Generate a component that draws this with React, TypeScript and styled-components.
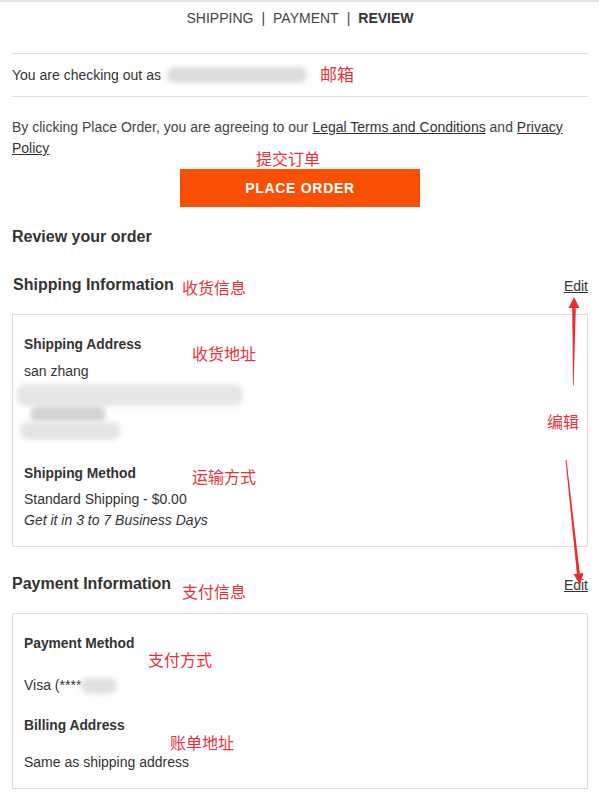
import styled, { createGlobalStyle } from "styled-components"

const GlobalStyle = createGlobalStyle`
  html, body {
    margin: 0;
    padding: 0;
    background: #fff;
  }
  body {
    font-family: "Liberation Sans", Arial, sans-serif;
    color: #333;
  }
`

const Page = styled.div`
  position: relative;
  width: 599px;
  min-height: 792px;
  box-sizing: border-box;
  padding: 0 11px 0 12px;
  border-top: 2px solid #e6e6e6;
  overflow: hidden;
`

const Steps = styled.nav`
  height: 51px;
  padding-top: 8px;
  box-sizing: border-box;
  text-align: center;
  font-size: 14px;
  line-height: 16px;
  color: #444;
`

const Step = styled.span<{ $active?: boolean }>`
  font-weight: ${({ $active }) => ($active ? 700 : 400)};
  color: ${({ $active }) => ($active ? "#333" : "#444")};
`

const Sep = styled.span`
  margin: 0 8px;
`

const Account = styled.div`
  display: flex;
  align-items: center;
  height: 42px;
  border-top: 1px solid #ddd;
  border-bottom: 1px solid #ddd;
  font-size: 14px;
`

const Smudge = styled.div<{ $w: number; $h: number; $x?: number; $tone?: string }>`
  width: ${({ $w }) => $w}px;
  height: ${({ $h }) => $h}px;
  margin-left: ${({ $x }) => $x ?? 0}px;
  background: ${({ $tone }) => $tone ?? "#e3e3e3"};
  border-radius: 8px;
  filter: blur(2.5px);
  flex-shrink: 0;
`

const Terms = styled.p`
  margin: 20px 0 0;
  font-size: 14px;
  line-height: 21px;
  color: #444;
`

const TermsLink = styled.a`
  color: #333;
  text-decoration: underline;
`

const PlaceOrder = styled.button`
  display: block;
  width: 240px;
  height: 38px;
  margin: 10px auto 0;
  border: none;
  background: #fa5005;
  color: #fff;
  font-family: "Liberation Sans", Arial, sans-serif;
  font-size: 14px;
  font-weight: 700;
  letter-spacing: 0.7px;
  cursor: pointer;
`

const ReviewTitle = styled.h2`
  margin: 20px 0 0;
  font-size: 16px;
  line-height: 20px;
  font-weight: 700;
  color: #333;
`

const SectionHead = styled.div<{ $top: number }>`
  display: flex;
  justify-content: space-between;
  align-items: center;
  margin-top: ${({ $top }) => $top}px;
  height: 20px;
`

const SectionTitle = styled.h3<{ $indent?: number }>`
  margin: 0 0 0 ${({ $indent }) => $indent ?? 0}px;
  font-size: 16px;
  line-height: 20px;
  font-weight: 700;
  color: #333;
`

const Edit = styled.a`
  font-size: 14px;
  line-height: 20px;
  color: #333;
  text-decoration: underline;
  margin-top: 2px;
`

const Card = styled.section`
  margin-top: 19px;
  border: 1px solid #ddd;
  padding: 21px 11px 15px;
`

const Label = styled.h4<{ $top?: number }>`
  margin: ${({ $top }) => $top ?? 0}px 0 0;
  font-size: 13.8px;
  line-height: 18px;
  font-weight: 700;
  color: #333;
`

const Value = styled.div<{ $top?: number; $italic?: boolean }>`
  display: flex;
  align-items: center;
  margin-top: ${({ $top }) => $top ?? 0}px;
  font-size: 14px;
  line-height: 21px;
  font-style: ${({ $italic }) => ($italic ? "italic" : "normal")};
  color: #333;
`

const Redacted = styled.div`
  display: flex;
  flex-direction: column;
  margin: 2px 0 0 -7px;
`

const Note = styled.span<{ $x: number; $y: number; $size?: number }>`
  position: absolute;
  left: ${({ $x }) => $x}px;
  top: ${({ $y }) => $y}px;
  font-family: "Noto Sans CJK SC", sans-serif;
  font-size: ${({ $size }) => $size ?? 16}px;
  line-height: 16px;
  color: #e8303a;
  white-space: nowrap;
`

const Arrows = styled.svg`
  position: absolute;
  left: 0;
  top: 0;
  pointer-events: none;
`

export default function App() {
  return (
    <>
      <GlobalStyle />
      <Page>
        <Steps>
          <Step>SHIPPING</Step>
          <Sep>|</Sep>
          <Step>PAYMENT</Step>
          <Sep>|</Sep>
          <Step $active>REVIEW</Step>
        </Steps>

        <Account>
          You are checking out as&nbsp;
          <Smudge $w={140} $h={16} $x={2} $tone="#dcdcdc" />
        </Account>

        <Terms>
          By clicking Place Order, you are agreeing to our <TermsLink>Legal Terms and Conditions</TermsLink> and{" "}
          <TermsLink>Privacy Policy</TermsLink>
        </Terms>

        <PlaceOrder>PLACE ORDER</PlaceOrder>

        <ReviewTitle>Review your order</ReviewTitle>

        <SectionHead $top={28}>
          <SectionTitle $indent={1}>Shipping Information</SectionTitle>
          <Edit>Edit</Edit>
        </SectionHead>
        <Card>
          <Label>Shipping Address</Label>
          <Value $top={7}>san zhang</Value>
          <Redacted>
            <Smudge $w={226} $h={22} $tone="#e6e6e6" />
            <Smudge $w={76} $h={16} $x={13} $tone="#d2d2d2" />
            <Smudge $w={100} $h={18} $x={3} $tone="#e4e4e4" />
          </Redacted>
          <Label $top={25}>Shipping Method</Label>
          <Value $top={6}>Standard Shipping - $0.00</Value>
          <Value $italic>Get it in 3 to 7 Business Days</Value>
        </Card>

        <SectionHead $top={27}>
          <SectionTitle>Payment Information</SectionTitle>
          <Edit>Edit</Edit>
        </SectionHead>
        <Card>
          <Label>Payment Method</Label>
          <Value $top={22}>
            Visa (****
            <Smudge $w={36} $h={16} $tone="#e0e0e0" />
          </Value>
          <Label $top={21}>Billing Address</Label>
          <Value $top={17}>Same as shipping address</Value>
        </Card>

        <Note $x={320} $y={64} $size={17}>邮箱</Note>
        <Note $x={256} $y={148}>提交订单</Note>
        <Note $x={182} $y={277}>收货信息</Note>
        <Note $x={192} $y={343}>收货地址</Note>
        <Note $x={547} $y={411}>编辑</Note>
        <Note $x={192} $y={466}>运输方式</Note>
        <Note $x={182} $y={581}>支付信息</Note>
        <Note $x={148} $y={649}>支付方式</Note>
        <Note $x={170} $y={732}>账单地址</Note>

        <Arrows width="599" height="792" viewBox="0 0 599 792">
          <polygon points="573,384 572.2,305 575.8,305 573.6,384" fill="#ef2a2f" />
          <polygon points="574,295 568.5,306 579.5,306" fill="#ef2a2f" />
          <polygon points="565.5,458 577,573 580,573 566.5,458" fill="#ef2a2f" />
          <polygon points="580,583 573.5,572 583.5,571" fill="#ef2a2f" />
        </Arrows>
      </Page>
    </>
  )
}
